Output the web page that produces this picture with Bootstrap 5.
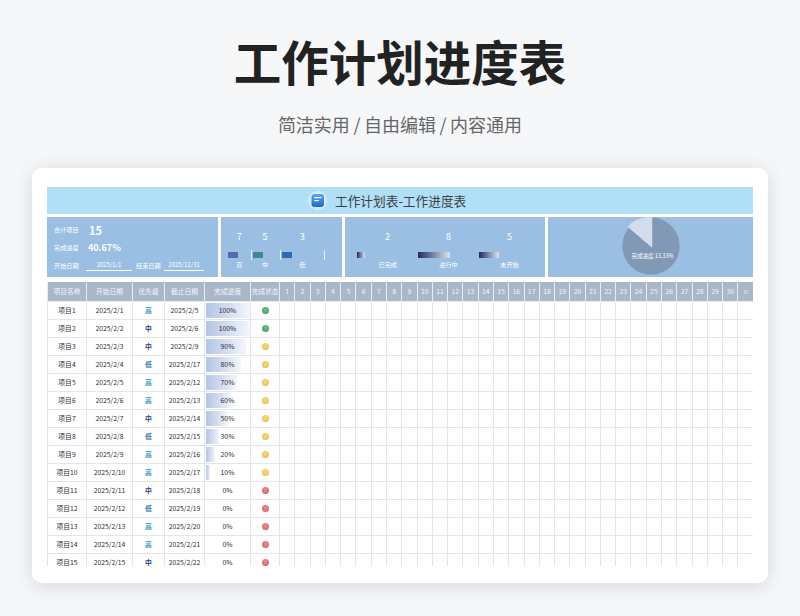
<!DOCTYPE html>
<html lang="zh-CN">
<head>
<meta charset="utf-8">
<title>工作计划进度表</title>
<link rel="stylesheet" href="https://cdn.jsdelivr.net/npm/bootstrap@5.3.0/dist/css/bootstrap.min.css">
<style>
html,body{height:100%}
body{background:#f6f7f9;font-family:"Noto Sans CJK SC","Noto Sans",sans-serif;overflow:hidden;color:#333}
.hero-title{font-size:47.5px;font-weight:700;line-height:60px;color:#222;margin:0;padding-top:31px;letter-spacing:0}
.hero-sub{font-size:18px;line-height:26px;color:#666;margin:0;padding-top:20px;word-spacing:-.5px}
.sheet-card{margin:31px 32px 0;height:415px;padding:19px 15px 0;border-radius:10px;box-shadow:0 3px 20px rgba(90,110,125,.22)}
.sheet-banner{height:27px;background:#b1dff5;padding-left:261px;gap:8px;font-size:12.7px;color:#3a3f47}
.banner-icon{width:19px;height:19px;flex:none}
.stat-row{height:60px;margin-top:3px;gap:3px;color:#fff}
.stat-panel{background:#9abfe3;height:60px;font-size:6.2px;flex:none}
.p-sum{width:171px;padding:4px 0 0 7px}
.p-pri{width:121px;padding:14px 0 0 7px}
.p-sta{width:200px;padding:14px 0 0 12px}
.p-pie{width:205px}
.sum-line{height:17.5px}
.sum-lab{width:25px;flex:none;white-space:nowrap}
.sum-big{font-size:11px;font-weight:700;margin-left:10px}
.sum-mid{font-size:9px;font-weight:700;margin-left:9px}
.sum-date{border-bottom:1px solid #fff;height:12px;line-height:12px;text-align:center;font-size:6px;flex:none}
.sum-last{padding-top:1px}
.w-a{width:46px;margin:0 4px 0 7px}
.w-b{width:40px;margin-left:3px}
.col-a{width:22.5px}.col-b{width:29px}.col-c{width:45.5px}.col-s{width:61px}
.num-line{height:12px;line-height:12px;font-size:9px;text-align:center}
.bar-line{height:10px;margin-top:7px;padding-left:1px;display:flex;align-items:center}
.tick-l{border-left:1px solid #e8f1fa}
.tick-r{border-right:1px solid #e8f1fa}
.lab-line{height:10px;line-height:10px;text-align:center;white-space:nowrap}
.pri-bar{width:10px;height:6px}
.sta-bar{height:6px;background:linear-gradient(90deg,#1c2c63,#e3e5ea)}
.grid-wrap{height:284px;margin-top:5px;overflow:hidden}
.plan-table{table-layout:fixed;width:706px;margin:0;border-collapse:collapse;font-size:6.8px;color:#2b2e33;--bs-table-bg:transparent}
.plan-table th,.plan-table td{padding:0;border:1px solid #e3e5e8;text-align:center;vertical-align:middle;line-height:1;overflow:hidden;white-space:nowrap;font-weight:400}
.plan-table thead th{height:19px;background:#a9b7c9;color:#f4f6f9;border:1px solid #e9edf2;border-top:0}
.plan-table tbody td{height:18px}
.plan-table tbody td.cell-bar{position:relative}
.fill-bar{position:absolute;left:1px;top:1px;bottom:1px;background:linear-gradient(90deg,#b3c4e6,#f3f6fb)}
.fill-txt{position:relative}
.plan-table td.pri-h{color:#3f9aca;font-weight:700}
.plan-table td.pri-m{color:#1f3f78;font-weight:700}
.plan-table td.pri-l{color:#3579b2;font-weight:700}
.dot{display:inline-block;width:7px;height:7px;border-radius:50%;vertical-align:middle}
.dot-g{background:radial-gradient(circle at 50% 40%,#74c482,#458f56)}
.dot-y{background:radial-gradient(circle at 50% 40%,#fcdc7a,#e6b243)}
.dot-r{background:radial-gradient(circle at 50% 40%,#ef8f8f,#c85a5a)}
.plan-table td.edge-cell{border-right-color:#aee6ee}
.plan-table th.day-tiny{font-size:5px}
</style>
</head>
<body>
<header class="text-center">
  <h1 class="hero-title">工作计划进度表</h1>
  <p class="hero-sub">简洁实用 / 自由编辑 / 内容通用</p>
</header>
<main class="card border-0 bg-white sheet-card">
  <div class="sheet-banner d-flex align-items-center">
    <svg class="banner-icon" viewBox="0 0 19 19" aria-hidden="true">
      <defs><linearGradient id="ig" x1="0" y1="0" x2="0" y2="1"><stop offset="0" stop-color="#57a8f0"/><stop offset="1" stop-color="#2167c6"/></linearGradient></defs>
      <circle cx="9.5" cy="9.5" r="9.5" fill="#d3eefa"/>
      <rect x="3.5" y="3" width="12.5" height="13" rx="3" fill="url(#ig)"/>
      <rect x="6" y="6" width="7.5" height="1.2" rx=".6" fill="#fff"/>
      <rect x="6" y="9" width="5" height="1.2" rx=".6" fill="#fff"/>
    </svg>
    <span>工作计划表-工作进度表</span>
  </div>
  <section class="d-flex stat-row">
    <div class="stat-panel p-sum">
      <div class="d-flex align-items-center sum-line"><span class="sum-lab">合计项目</span><span class="sum-big">15</span></div>
      <div class="d-flex align-items-center sum-line"><span class="sum-lab">完成进度</span><span class="sum-mid">40.67%</span></div>
      <div class="d-flex align-items-center sum-line sum-last"><span class="sum-lab">开始日期</span><span class="sum-date w-a">2025/1/1</span><span class="sum-lab">结束日期</span><span class="sum-date w-b">2025/12/31</span></div>
    </div>
    <div class="stat-panel p-pri d-flex">
      <div class="col-a"><div class="num-line">7</div><div class="bar-line ps-0"><div class="pri-bar" style="background:#5a68ad"></div></div><div class="lab-line">高</div></div>
      <div class="col-b"><div class="num-line">5</div><div class="bar-line tick-l"><div class="pri-bar" style="background:#3f8a8e"></div></div><div class="lab-line">中</div></div>
      <div class="col-c"><div class="num-line">3</div><div class="bar-line tick-l tick-r"><div class="pri-bar" style="background:#2c6cb0"></div></div><div class="lab-line">低</div></div>
    </div>
    <div class="stat-panel p-sta d-flex">
      <div class="col-s"><div class="num-line">2</div><div class="bar-line ps-0"><div class="sta-bar" style="width:8px"></div></div><div class="lab-line">已完成</div></div>
      <div class="col-s"><div class="num-line">8</div><div class="bar-line ps-0"><div class="sta-bar" style="width:32px"></div></div><div class="lab-line">进行中</div></div>
      <div class="col-s"><div class="num-line">5</div><div class="bar-line ps-0"><div class="sta-bar" style="width:20px"></div></div><div class="lab-line">未开始</div></div>
    </div>
    <div class="stat-panel p-pie d-flex justify-content-center">
      <svg width="70" height="60" viewBox="0 0 70 60" aria-label="完成进度 13.33%">
        <circle cx="35" cy="29" r="28.7" fill="#8299b6"/>
        <path d="M36.2 30.7 L11.5 9.7 A31 31 0 0 1 36.2 0 Z" fill="#d3dcec"/>
        <text x="36.5" y="40.5" text-anchor="middle" font-size="5.5" fill="#fff">完成进度 13.33%</text>
      </svg>
    </div>
  </section>
  <div class="grid-wrap">
    <table class="table plan-table">
      <colgroup id="cols"></colgroup>
      <thead><tr id="head"></tr></thead>
      <tbody id="rows"></tbody>
    </table>
  </div>
</main>
<script src="https://cdn.jsdelivr.net/npm/bootstrap@5.3.0/dist/js/bootstrap.bundle.min.js"></script>
<script>
var widths=[39,46,32,40,46,29],i,d,h='',c='';
for(i=0;i<6;i++)c+='<col style="width:'+widths[i]+'px">';
for(i=0;i<31;i++)c+='<col style="width:15.29px">';
document.getElementById('cols').innerHTML=c;
['项目名称','开始日期','优先级','截止日期','完成进度','完成状态'].forEach(function(t){h+='<th>'+t+'</th>'});
for(d=1;d<=31;d++)h+='<th'+(d==31?' class="day-tiny"':'')+'>'+d+'</th>';
document.getElementById('head').innerHTML=h;
var pri='高中中低高高中低高高中低高高中',end=[5,6,9,17,12,13,14,15,16,17,18,19,20,21,22],pct=[100,100,90,80,70,60,50,30,20,10,0,0,0,0,0],r='';
var cls={'高':'pri-h','中':'pri-m','低':'pri-l'};
for(i=0;i<15;i++){
  var p=pct[i],dot=p==100?'dot-g':(p>0?'dot-y':'dot-r');
  r+='<tr><td>项目'+(i+1)+'</td><td>2025/2/'+(i+1)+'</td><td class="'+cls[pri[i]]+'">'+pri[i]+'</td><td>2025/2/'+end[i]+'</td>';
  r+='<td class="cell-bar">'+(p?'<div class="fill-bar" style="width:'+(p*0.44)+'px"></div>':'')+'<span class="fill-txt">'+p+'%</span></td>';
  r+='<td><span class="dot '+dot+'"></span></td>';
  for(d=1;d<=31;d++)r+='<td'+(i==0&&d==31?' class="edge-cell"':'')+'></td>';
  r+='</tr>';
}
document.getElementById('rows').innerHTML=r;
</script>
</body>
</html>
